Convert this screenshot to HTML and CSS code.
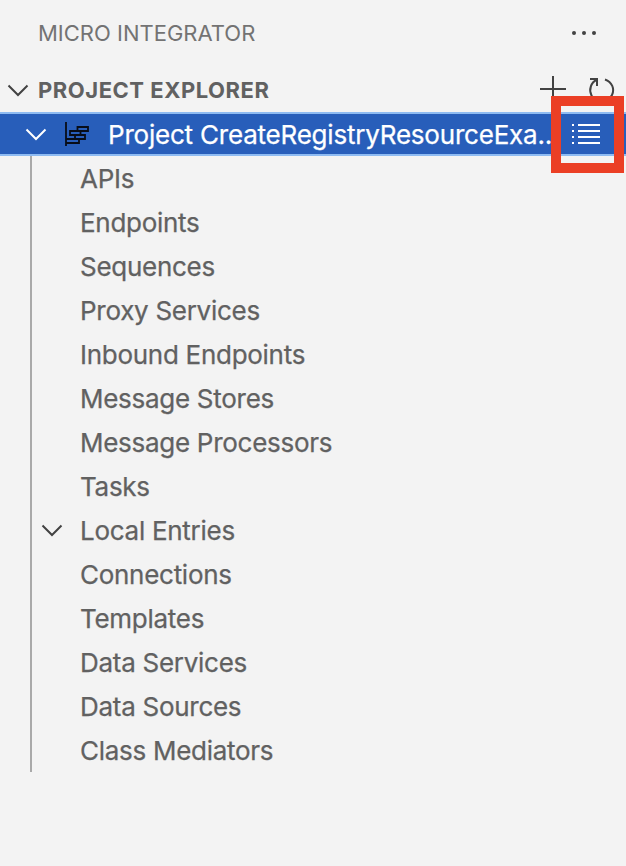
FILE: index.html
```html
<!DOCTYPE html>
<html lang="en">
<head>
<meta charset="utf-8">
<title>Micro Integrator</title>
<link rel="stylesheet" href="styles.css">
</head>
<body>
<div class="sidebar">
  <header class="title-bar">
    <h1 class="title">MICRO INTEGRATOR</h1>
    <svg class="more" width="26" height="6" viewBox="0 0 26 6"><circle cx="3" cy="3" r="2"/><circle cx="13" cy="3" r="2"/><circle cx="23" cy="3" r="2"/></svg>
  </header>
  <section class="section-bar">
    <svg class="chevron" width="22" height="14" viewBox="0 0 22 14"><path d="M1.5 2.5 11 12 20.5 2.5"/></svg>
    <h2 class="section-title">PROJECT EXPLORER</h2>
    <svg class="add" width="28" height="28" viewBox="0 0 28 28"><path d="M1 13H27M14 0V26"/></svg>
    <svg class="refresh" width="28" height="28" viewBox="0 0 28 28"><path d="M2 3H9V10M9 3.5C3 6.5 .5 13.5 3.5 19.5Q5.5 23 9.5 25M17 3.5C24 6 27 13 24 19Q22 23 18 25"/></svg>
  </section>
  <div class="project">
    <svg class="chevron" width="22" height="14" viewBox="0 0 22 14"><path d="M1.5 2.5 11 12 20.5 2.5"/></svg>
    <svg class="project-icon" width="26" height="26" viewBox="0 0 26 26"><path d="M2 1V25M13.5 6H24V10H13.5ZM6 10H16.5V14H6ZM11 14H21V18H11ZM2 18H15V22H2Z"/></svg>
    <span class="project-name">Project CreateRegistryResourceExa..</span>
    <div class="action">
      <svg width="30" height="22" viewBox="0 0 30 22"><path d="M1 2H3M1 8H3M1 14H3M1 20H3M7 2H29M7 8H29M7 14H29M7 20H29"/></svg>
    </div>
  </div>
  <ul class="tree">
    <li>APIs</li>
    <li>Endpoints</li>
    <li>Sequences</li>
    <li>Proxy Services</li>
    <li>Inbound Endpoints</li>
    <li>Message Stores</li>
    <li>Message Processors</li>
    <li>Tasks</li>
    <li class="expandable"><svg class="chevron" width="22" height="14" viewBox="0 0 22 14"><path d="M1.5 2.5 11 12 20.5 2.5"/></svg>Local Entries</li>
    <li>Connections</li>
    <li>Templates</li>
    <li>Data Services</li>
    <li>Data Sources</li>
    <li>Class Mediators</li>
  </ul>
</div>
</body>
</html>
```
FILE: styles.css
```css
* { box-sizing: border-box; }
body {
  margin: 0;
  background: #f3f3f3;
  color: #616161;
  font-family: Inter, "Liberation Sans", sans-serif;
}
.sidebar { width: 626px; height: 866px; overflow: hidden; }
svg { display: block; flex: none; fill: none; stroke: #424242; stroke-width: 2; }
h1, h2 { margin: 0; font-size: 22px; line-height: 44px; white-space: nowrap; }
.title-bar { display: flex; align-items: center; height: 68px; padding: 0 29px 2px 38px; }
.title { flex: 1; font-weight: 400; color: #737373; }
.more { fill: #424242; stroke: none; }
.section-bar { display: flex; align-items: center; height: 44px; padding: 0 10px 0 7px; }
.section-title { flex: 1; margin-left: 9px; font-weight: 700; letter-spacing: 0.53px; }
.refresh { margin-left: 21px; }
.project {
  display: flex;
  align-items: center;
  height: 44px;
  padding-left: 25px;
  border-top: 2px solid #8ebbf2;
  border-bottom: 2px solid #8ebbf2;
  background: #285eba;
  color: #fff;
  font-size: 26px;
  -webkit-text-stroke: 0.25px #fff;
}
.project .chevron { stroke: #fff; }
.project .project-icon { margin-left: 17px; stroke: #080d18; stroke-width: 1.8; }
.project-name { width: 443px; margin-left: 18px; letter-spacing: -0.21px; white-space: nowrap; }
.action {
  display: flex;
  flex: none;
  align-items: center;
  justify-content: center;
  width: 73px;
  height: 77px;
  padding-right: 4px;
  border: 10px solid #eb3f25;
}
.action svg { stroke: #fff; }
.tree {
  margin: 0 0 0 30px;
  padding: 0 0 0 9px;
  border-left: 2px solid #a9a9a9;
  list-style: none;
  font-size: 26px;
  letter-spacing: -0.28px;
  -webkit-text-stroke: 0.25px #616161;
}
.tree li { display: flex; align-items: center; height: 44px; padding: 0 0 0 39px; white-space: nowrap; }
.tree .expandable { padding-left: 0; }
.expandable .chevron { margin-right: 17px; }
```
